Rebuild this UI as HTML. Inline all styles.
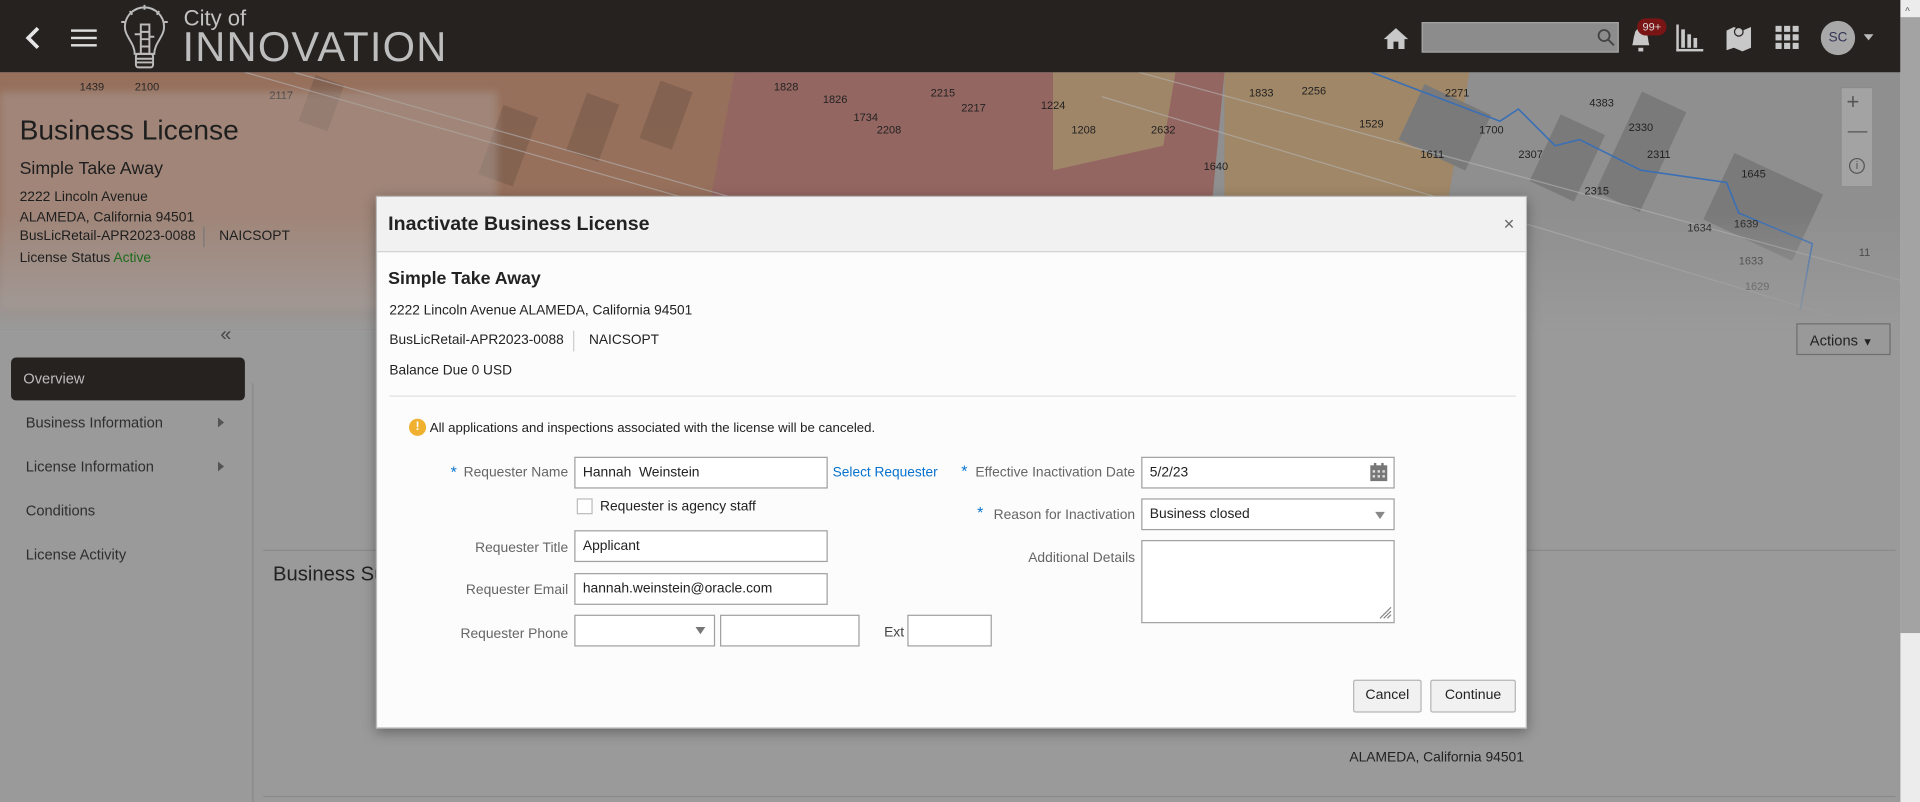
<!DOCTYPE html>
<html><head><meta charset="utf-8"><style>
*{box-sizing:border-box;margin:0;padding:0}
html,body{width:1920px;height:802px;overflow:hidden;background:#999}
#w{position:absolute;left:0;top:0;width:1568px;height:655px;transform:scale(1.22449);transform-origin:0 0;font-family:"Liberation Sans",sans-serif;background:#9a9a9a;overflow:hidden}
.a{position:absolute;white-space:nowrap}
.hdr{left:0;top:0;width:1552px;height:59px;background:#262220}
.map{left:0;top:59px;width:1552px;height:210px;overflow:hidden}
.side{color:#2e2e2e;font-size:12px}
.lbl{color:#666;font-size:11.3px;text-align:right}
.in{background:#fff;border:1px solid #a0a0a0;font-size:11.3px;color:#222;padding:6px 6px;height:26px}
.star{color:#0572ce;font-size:13px}
.btn{border:1px solid #b5b5b5;background:#f1f1f1;font-size:11.5px;color:#222;text-align:center;line-height:24px;height:27px;border-radius:2px}
</style></head><body><div id="w">
<div class="a map">
<svg width="1552" height="210" style="position:absolute;left:0;top:0">
<defs><linearGradient id="f" x1="0" y1="0" x2="0" y2="1"><stop offset="0.55" stop-color="#9a9a9a" stop-opacity="0"/><stop offset="1" stop-color="#9a9a9a" stop-opacity="1"/></linearGradient></defs>
<rect width="1552" height="210" fill="#8f8f8f"/>
<rect x="0" y="0" width="620" height="210" fill="#97705c"/>
<polygon points="600,0 1000,0 980,210 560,210" fill="#946661"/>
<polygon points="1000,0 1200,0 1180,120 1000,160" fill="#a08767"/>
<polygon points="860,0 960,0 950,60 860,80" fill="#a08668"/>
<g fill="#80604f" opacity=".8">
<rect x="400" y="30" width="30" height="60" transform="rotate(20 415 60)"/><rect x="470" y="20" width="28" height="50" transform="rotate(20 484 45)"/><rect x="530" y="10" width="28" height="50" transform="rotate(20 544 35)"/><rect x="250" y="5" width="25" height="40" transform="rotate(20 262 25)"/>
</g>
<g fill="#7a7a7a"><rect x="1260" y="40" width="40" height="60" transform="rotate(25 1280 70)"/><rect x="1320" y="20" width="40" height="90" transform="rotate(25 1340 65)"/><rect x="1400" y="80" width="80" height="60" transform="rotate(25 1440 110)"/><rect x="1150" y="20" width="60" height="50" transform="rotate(25 1180 45)"/></g>
<g stroke="#b5b5b5" stroke-width="1" fill="none" opacity=".6"><line x1="200" y1="0" x2="900" y2="200"/><line x1="240" y1="0" x2="940" y2="200"/><line x1="900" y1="20" x2="1500" y2="200"/><line x1="930" y1="0" x2="1552" y2="170"/></g>
<polyline points="1120,0 1225,40 1240,30 1270,60 1290,55 1340,80 1410,90 1420,115 1480,140 1470,195" stroke="#3a6fb5" stroke-width="1.3" fill="none"/>
<g font-size="9" fill="#222"><text x="65" y="15">1439</text><text x="110" y="15">2100</text><text x="220" y="22">2117</text><text x="632" y="15">1828</text><text x="672" y="25">1826</text><text x="697" y="40">1734</text><text x="716" y="50">2208</text><text x="760" y="20">2215</text><text x="785" y="32">2217</text><text x="850" y="30">1224</text><text x="875" y="50">1208</text><text x="940" y="50">2632</text><text x="983" y="80">1640</text><text x="1020" y="20">1833</text><text x="1063" y="18">2256</text><text x="1110" y="45">1529</text><text x="1160" y="70">1611</text><text x="1180" y="20">2271</text><text x="1208" y="50">1700</text><text x="1240" y="70">2307</text><text x="1298" y="28">4383</text><text x="1294" y="100">2315</text><text x="1378" y="130">1634</text><text x="1422" y="86">1645</text><text x="1416" y="127">1639</text><text x="1420" y="157">1633</text><text x="1425" y="178">1629</text><text x="1518" y="150">11</text><text x="1330" y="48">2330</text><text x="1345" y="70">2311</text></g>
<text x="1455" y="200" font-size="9" fill="#888">Powered by Esri</text>
<rect width="1552" height="210" fill="url(#f)"/>
</svg>
<div class="a" style="left:0;top:16px;width:406px;height:178px;background:rgba(170,160,155,.45);filter:blur(3px)"></div>
<div class="a" style="left:1503px;top:12px;width:27px;height:82px;background:#a3a3a3;border:1px solid #8a8a8a"></div>
<div class="a" style="left:1508px;top:14px;font-size:18px;color:#555">+</div>
<div class="a" style="left:1509px;top:40px;font-size:16px;color:#555">—</div>
<div class="a" style="left:1510px;top:70px;width:13px;height:13px;border:1px solid #555;border-radius:50%;font-size:9px;color:#555;text-align:center;line-height:11px">i</div>
</div>
<div class="a" style="left:16px;top:93px;font-size:23px;color:#1e1e1e">Business License</div>
<div class="a" style="left:16px;top:130px;font-size:14.5px;color:#1e1e1e">Simple Take Away</div>
<div class="a" style="left:16px;top:153px;font-size:11.3px;color:#1e1e1e;line-height:16.5px">2222 Lincoln Avenue<br>ALAMEDA, California 94501</div>
<div class="a" style="left:16px;top:187px;font-size:11.3px;color:#1e1e1e">BusLicRetail-APR2023-0088</div>
<div class="a" style="left:166px;top:185px;width:1px;height:17px;background:#777"></div>
<div class="a" style="left:179px;top:187px;font-size:11.3px;color:#1e1e1e">NAICSOPT</div>
<div class="a" style="left:16px;top:205px;font-size:11.3px;color:#1e1e1e">License Status <span style="color:#1d6b1d">Active</span></div>
<div class="a hdr">
<svg class="a" style="left:20px;top:21px" width="14" height="20"><path d="M11 2 L3 10 L11 18" stroke="#e6e6e6" stroke-width="3" fill="none"/></svg>
<div class="a" style="left:58px;top:24px;width:21px;height:2px;background:#ddd;box-shadow:0 6px 0 #ddd,0 12px 0 #ddd"></div>
<svg class="a" style="left:94px;top:2px" width="48" height="56" stroke="#bbb" fill="none" stroke-width="1.6"><path d="M24 2v4M12 7l2 3M36 7l-2 3M5 16h3M40 16h3"/><path d="M16 42 C16 33 8 28 8 20 a16 16 0 0 1 32 0 c0 8 -8 13 -8 22z"/><rect x="21" y="18" width="7" height="24"/><path d="M21 24h7M21 30h7M21 36h7M16 26h5M28 28h4"/><rect x="17" y="42" width="14" height="11" rx="2"/><path d="M17 46h14M17 49h14"/></svg>
<div class="a" style="left:150px;top:5px;font-size:18px;color:#c2c2c2">City of</div>
<div class="a" style="left:149px;top:20px;font-size:34px;color:#bdbdbd;letter-spacing:1px">INNOVATION</div>
<svg class="a" style="left:1129px;top:21px" width="22" height="20"><path d="M11 2 L1 11 H4 V19 H9 V13 H13 V19 H18 V11 H21z" fill="#c8c8c8"/></svg>
<div class="a" style="left:1161px;top:18px;width:161px;height:25px;background:#8c8c8c;border:1px solid #a5a5a5"></div>
<svg class="a" style="left:1304px;top:23px" width="15" height="15" stroke="#444" fill="none" stroke-width="1.5"><circle cx="6" cy="6" r="4.5"/><path d="M9 9l5 5"/></svg>
<svg class="a" style="left:1329px;top:20px" width="22" height="24"><path d="M4 17 C5 14 5 10 6 8 a5 5 0 0 1 10 0 c1 2 1 6 2 9z" fill="#c8c8c8"/><rect x="9" y="19" width="4" height="3" fill="#c8c8c8"/></svg>
<div class="a" style="left:1337px;top:15px;width:24px;height:14px;border-radius:7px;background:#7a1515;color:#ddd;font-size:9px;text-align:center;line-height:14px">99+</div>
<svg class="a" style="left:1368px;top:19px" width="24" height="24" fill="#c8c8c8"><rect x="1" y="1" width="2" height="22"/><rect x="1" y="21" width="22" height="2"/><rect x="5" y="5" width="3" height="15"/><rect x="10" y="9" width="3" height="11"/><rect x="15" y="12" width="3" height="8"/></svg>
<svg class="a" style="left:1409px;top:19px" width="22" height="24" fill="#c8c8c8"><path d="M1 6 L7 3 L14 6 L21 3 V20 L14 23 L7 20 L1 22z"/><circle cx="11" cy="7" r="4" fill="#262220"/><circle cx="11" cy="7" r="3"/></svg>
<svg class="a" style="left:1450px;top:21px" width="19" height="19" fill="#c8c8c8"><rect x="0" y="0" width="5" height="5"/><rect x="7" y="0" width="5" height="5"/><rect x="14" y="0" width="5" height="5"/><rect x="0" y="7" width="5" height="5"/><rect x="7" y="7" width="5" height="5"/><rect x="14" y="7" width="5" height="5"/><rect x="0" y="14" width="5" height="5"/><rect x="7" y="14" width="5" height="5"/><rect x="14" y="14" width="5" height="5"/></svg>
<div class="a" style="left:1487px;top:17px;width:28px;height:28px;border-radius:50%;background:#a8a8a8;color:#335;font-size:11px;text-align:center;line-height:28px">SC</div>
<div class="a" style="left:1522px;top:28px;border-left:4px solid transparent;border-right:4px solid transparent;border-top:5px solid #bbb"></div>
</div>
<div class="a" style="left:1552px;top:0;width:16px;height:655px;background:#ececec"></div>
<div class="a" style="left:1552px;top:14px;width:16px;height:503px;background:#a3a3a3"></div>
<div class="a" style="left:1556px;top:5px;font-size:8px;color:#555">^</div>
<div class="a" style="left:180px;top:265px;font-size:16px;color:#444">«</div>
<div class="a" style="left:9px;top:292px;width:191px;height:35px;background:#262220;border-radius:4px"></div>
<div class="a" style="left:19px;top:302px;font-size:12px;color:#bdbdbd">Overview</div>
<div class="a side" style="left:21px;top:338px">Business Information</div>
<div class="a side" style="left:21px;top:374px">License Information</div>
<div class="a side" style="left:21px;top:410px">Conditions</div>
<div class="a side" style="left:21px;top:446px">License Activity</div>
<div class="a" style="left:178px;top:341px;border-top:4px solid transparent;border-bottom:4px solid transparent;border-left:5px solid #555"></div>
<div class="a" style="left:178px;top:377px;border-top:4px solid transparent;border-bottom:4px solid transparent;border-left:5px solid #555"></div>
<div class="a" style="left:206px;top:313px;width:1px;height:342px;background:#888"></div>
<div class="a" style="left:215px;top:449px;width:1333px;height:1px;background:#8a8a8a"></div>
<div class="a" style="left:215px;top:650px;width:1333px;height:1px;background:#8a8a8a"></div>
<div class="a" style="left:223px;top:460px;font-size:16.5px;color:#222">Business Summary</div>
<div class="a" style="left:1102px;top:613px;font-size:11.3px;color:#222">ALAMEDA, California 94501</div>
<div class="a" style="left:1467px;top:264px;width:77px;height:26px;border:1px solid #6e6e6e;background:#999;font-size:12px;color:#222;padding:6px 0 0 10px">Actions <span style="font-size:9px">&#9660;</span></div>
<div class="a" style="left:307px;top:160px;width:940px;height:435px;background:#fcfcfc;box-shadow:0 3px 10px rgba(0,0,0,.35);border:1px solid #bbb">
<div class="a" style="left:0;top:0;width:938px;height:45px;background:#f1f1f1;border-bottom:1px solid #d4d4d4"></div>
<div class="a" style="left:9px;top:14px;font-size:16px;font-weight:bold;color:#222">Inactivate Business License</div>
<div class="a" style="left:920px;top:14px;font-size:15px;color:#666">×</div>
<div class="a" style="left:9px;top:59px;font-size:14.5px;font-weight:bold;color:#222">Simple Take Away</div>
<div class="a" style="left:10px;top:87px;font-size:11.2px;color:#222">2222 Lincoln Avenue ALAMEDA, California 94501</div>
<div class="a" style="left:10px;top:111px;font-size:11.2px;color:#222">BusLicRetail-APR2023-0088</div>
<div class="a" style="left:160px;top:109px;width:1px;height:17px;background:#ccc"></div>
<div class="a" style="left:173px;top:111px;font-size:11.2px;color:#222">NAICSOPT</div>
<div class="a" style="left:10px;top:136px;font-size:11.2px;color:#222">Balance Due 0 USD</div>
<div class="a" style="left:10px;top:162px;width:920px;height:1px;background:#e2e2e2"></div>
<div class="a" style="left:26px;top:181px;width:14px;height:14px;border-radius:50%;background:#f0b030;color:#fff;font-size:10px;font-weight:bold;text-align:center;line-height:14px">!</div>
<div class="a" style="left:43px;top:183px;font-size:10.8px;color:#222">All applications and inspections associated with the license will be canceled.</div>
<div class="a star" style="left:60px;top:217px">*</div>
<div class="a lbl" style="left:50px;width:106px;top:219px">Requester Name</div>
<div class="a in" style="left:161px;top:212px;width:207px">Hannah&nbsp; Weinstein</div>
<div class="a" style="left:372px;top:219px;font-size:11.2px;color:#0572ce">Select Requester</div>
<div class="a" style="left:163px;top:246px;width:13px;height:13px;border:1px solid #bbb;background:#fff"></div>
<div class="a" style="left:182px;top:247px;font-size:11.3px;color:#222">Requester is agency staff</div>
<div class="a lbl" style="left:50px;width:106px;top:281px">Requester Title</div>
<div class="a in" style="left:161px;top:272px;width:207px">Applicant</div>
<div class="a lbl" style="left:50px;width:106px;top:315px">Requester Email</div>
<div class="a in" style="left:161px;top:307px;width:207px">hannah.weinstein@oracle.com</div>
<div class="a lbl" style="left:50px;width:106px;top:351px">Requester Phone</div>
<div class="a in" style="left:161px;top:341px;width:115px"></div>
<div class="a" style="left:260px;top:351px;border-left:4px solid transparent;border-right:4px solid transparent;border-top:6px solid #777"></div>
<div class="a in" style="left:280px;top:341px;width:114px"></div>
<div class="a" style="left:414px;top:350px;font-size:11.3px;color:#444">Ext</div>
<div class="a in" style="left:433px;top:341px;width:69px"></div>
<div class="a star" style="left:477px;top:216px">*</div>
<div class="a lbl" style="left:460px;width:159px;top:219px">Effective Inactivation Date</div>
<div class="a in" style="left:624px;top:212px;width:207px">5/2/23</div>
<svg class="a" style="left:811px;top:217px" width="14" height="15" fill="#777"><rect x="0" y="2" width="14" height="13"/><rect x="3" y="0" width="2" height="4"/><rect x="9" y="0" width="2" height="4"/><g fill="#ddd"><rect x="2" y="6" width="2" height="2"/><rect x="6" y="6" width="2" height="2"/><rect x="10" y="6" width="2" height="2"/><rect x="2" y="10" width="2" height="2"/><rect x="6" y="10" width="2" height="2"/><rect x="10" y="10" width="2" height="2"/></g></svg>
<div class="a star" style="left:490px;top:250px">*</div>
<div class="a lbl" style="left:460px;width:159px;top:254px">Reason for Inactivation</div>
<div class="a in" style="left:624px;top:246px;width:207px">Business closed</div>
<div class="a" style="left:815px;top:257px;border-left:4px solid transparent;border-right:4px solid transparent;border-top:6px solid #888"></div>
<div class="a lbl" style="left:460px;width:159px;top:289px">Additional Details</div>
<div class="a in" style="left:624px;top:280px;width:207px;height:68px"></div>
<svg class="a" style="left:818px;top:334px" width="11" height="11" stroke="#888"><path d="M1 10L10 1M4 10L10 4M7 10L10 7"/></svg>
<div class="a btn" style="left:797px;top:394px;width:56px">Cancel</div>
<div class="a btn" style="left:860px;top:394px;width:70px">Continue</div>
</div>
</div></body></html>
